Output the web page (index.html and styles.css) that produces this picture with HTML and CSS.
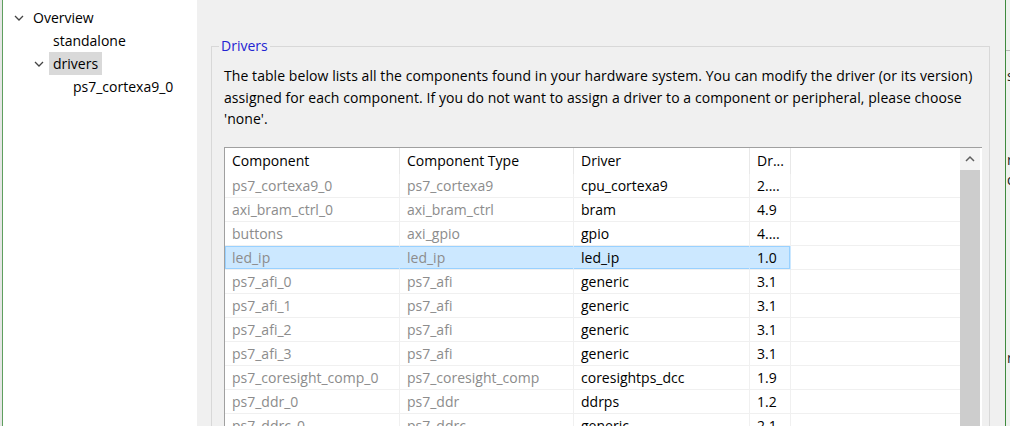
FILE: index.html
```html
<!DOCTYPE html>
<html>
<head>
<meta charset="utf-8">
<link rel="stylesheet" href="styles.css">
</head>
<body>
<div class="app">
  <aside class="tree">
    <ul class="tree-list">
      <li class="node lvl0"><span class="twisty"><svg viewBox="0 0 10 10" width="10" height="10"><polyline points="1,3 5,7 9,3" /></svg></span><span class="label">Overview</span></li>
      <li class="node lvl1"><span class="twisty"></span><span class="label">standalone</span></li>
      <li class="node lvl1"><span class="twisty"><svg viewBox="0 0 10 10" width="10" height="10"><polyline points="1,3 5,7 9,3" /></svg></span><span class="label selected">drivers</span></li>
      <li class="node lvl2"><span class="twisty"></span><span class="label">ps7_cortexa9_0</span></li>
    </ul>
  </aside>
  <main class="main">
    <fieldset class="group">
      <legend>Drivers</legend>
      <p class="desc">The table below lists all the components found in your hardware system. You can modify the driver (or its version)<br>assigned for each component. If you do not want to assign a driver to a component or peripheral, please choose<br>'none'.</p>
      <div class="table">
        <table class="grid">
          <thead>
            <tr><th class="c1">Component</th><th class="c2">Component Type</th><th class="c3">Driver</th><th class="c4">Dr...</th><th class="c5"></th></tr>
          </thead>
          <tbody>
            <tr><td class="dim">ps7_cortexa9_0</td><td class="dim">ps7_cortexa9</td><td>cpu_cortexa9</td><td>2....</td><td></td></tr>
            <tr><td class="dim">axi_bram_ctrl_0</td><td class="dim">axi_bram_ctrl</td><td>bram</td><td>4.9</td><td></td></tr>
            <tr><td class="dim">buttons</td><td class="dim">axi_gpio</td><td>gpio</td><td>4....</td><td></td></tr>
            <tr class="sel"><td class="dim">led_ip</td><td class="dim">led_ip</td><td>led_ip</td><td>1.0</td><td></td></tr>
            <tr><td class="dim">ps7_afi_0</td><td class="dim">ps7_afi</td><td>generic</td><td>3.1</td><td></td></tr>
            <tr><td class="dim">ps7_afi_1</td><td class="dim">ps7_afi</td><td>generic</td><td>3.1</td><td></td></tr>
            <tr><td class="dim">ps7_afi_2</td><td class="dim">ps7_afi</td><td>generic</td><td>3.1</td><td></td></tr>
            <tr><td class="dim">ps7_afi_3</td><td class="dim">ps7_afi</td><td>generic</td><td>3.1</td><td></td></tr>
            <tr><td class="dim">ps7_coresight_comp_0</td><td class="dim">ps7_coresight_comp</td><td>coresightps_dcc</td><td>1.9</td><td></td></tr>
            <tr><td class="dim">ps7_ddr_0</td><td class="dim">ps7_ddr</td><td>ddrps</td><td>1.2</td><td></td></tr>
            <tr><td class="dim">ps7_ddrc_0</td><td class="dim">ps7_ddrc</td><td>generic</td><td>2.1</td><td></td></tr>
          </tbody>
        </table>
        <div class="vscroll">
          <div class="up"><svg viewBox="0 0 10 10" width="10" height="10"><polyline points="1,7 5,3 9,7" /></svg></div>
          <div class="thumb"></div>
        </div>
      </div>
    </fieldset>
  </main>
  <div class="edge">
    <div class="edge-head"></div>
    <div class="edge-text">
      <div class="l1">s</div>
      <div class="l2">r</div>
      <div class="l3">d</div>
      <div class="l4">r</div>
    </div>
  </div>
</div>
</body>
</html>
```

FILE: styles.css
```css
html, body {
  margin: 0;
  padding: 0;
  height: 426px;
  overflow: hidden;
  background: #e6e6e6;
}

body {
  font-family: "Open Sans", "Noto Sans", sans-serif;
  font-size: 14px;
  color: #000;
}

.app {
  display: flex;
  height: 426px;
}

/* Tree */
.tree {
  width: 194px;
  margin-left: 2px;
  border-left: 1px solid #5f9f5f;
  background: #fff;
  flex: none;
}

.tree-list {
  list-style: none;
  margin: 0;
  padding: 6px 0 0 6px;
}

.node {
  display: flex;
  align-items: center;
  height: 23px;
}

.lvl1 { padding-left: 20px; }
.lvl2 { padding-left: 40px; }

.twisty {
  width: 20px;
  height: 23px;
  display: flex;
  align-items: center;
  justify-content: center;
  flex: none;
}

.twisty svg polyline {
  fill: none;
  stroke: #444;
  stroke-width: 1.3;
}

.label {
  padding: 0 4px;
  line-height: 23px;
  white-space: nowrap;
}

.label.selected {
  background: #d9d9d9;
}

/* Main */
.main {
  flex: 1;
  background: #f0f0f0;
  padding-top: 36px;
  min-width: 0;
}

.group {
  margin: 0 15px 0 14px;
  padding: 0 7px 0 12px;
  border: 1px solid #d8d8d8;
  min-width: 0;
}

.group legend {
  color: #2323d2;
  padding: 0 2px;
  margin-left: -5px;
  line-height: 20px;
}

.desc {
  margin: 9px 0 0;
  line-height: 21.5px;
  letter-spacing: 0.07px;
  white-space: nowrap;
}

.table {
  margin-top: 17px;
  border: 1px solid #a0a0a0;
  background: #fff;
  display: flex;
  height: 300px;
}

.grid {
  border-collapse: separate;
  border-spacing: 0;
  table-layout: fixed;
  width: 735px;
  flex: none;
  align-self: flex-start;
}

.grid th, .grid td {
  padding: 0 0 0 7px;
  text-align: left;
  font-weight: normal;
  white-space: nowrap;
  overflow: hidden;
  border-right: 1px solid #f0f0f0;
}

.grid th {
  height: 26px;
  border-right-color: #e8e8e8;
}

.grid td {
  height: 23px;
  border-bottom: 1px solid #f0f0f0;
}

.grid .c1 { width: 167px; }
.grid .c2 { width: 166px; }
.grid .c3 { width: 168px; }
.grid .c4 { width: 33px; }
.grid .c5 { width: 162px; border-right: none; }

.grid td:last-child { border-right: none; }

.grid td.dim { color: #8c8c8c; }

.grid tr.sel td {
  background: #cce8ff;
  box-shadow: inset 0 1px #99d1ff, inset 0 -1px #99d1ff;
  border-right-color: #cce8ff;
}

.grid tr.sel td:first-child {
  box-shadow: inset 0 1px #99d1ff, inset 0 -1px #99d1ff, inset 1px 0 #99d1ff;
}

.grid tr.sel td:nth-child(4) {
  box-shadow: inset 0 1px #99d1ff, inset 0 -1px #99d1ff, inset -1px 0 #99d1ff;
}

.grid tr.sel td:last-child {
  background: #fff;
  box-shadow: none;
}

.vscroll {
  width: 22px;
  flex: none;
  display: flex;
  flex-direction: column;
  background: #fff;
}

.up {
  height: 22px;
  display: flex;
  align-items: center;
  justify-content: center;
  background: #f4f4f4;
  width: 20px;
}

.up svg polyline {
  fill: none;
  stroke: #606060;
  stroke-width: 1.5;
}

.thumb {
  flex: 1;
  width: 20px;
  background: #cdcdcd;
}

/* Right edge */
.edge {
  width: 4px;
  flex: none;
  border-left: 1px solid #3e8a3e;
  background: #eef2ee;
  overflow: hidden;
  font-size: 14px;
}

.edge-head {
  height: 50px;
  border-bottom: 1px solid #b8b8b8;
}

.edge-text div {
  padding-left: 1px;
  line-height: 20px;
  color: #222;
}

.edge-text .l1 { margin-top: 15px; }
.edge-text .l2 { margin-top: 64px; }
.edge-text .l3 { margin-top: 0; }
.edge-text .l4 { margin-top: 158px; }
```
